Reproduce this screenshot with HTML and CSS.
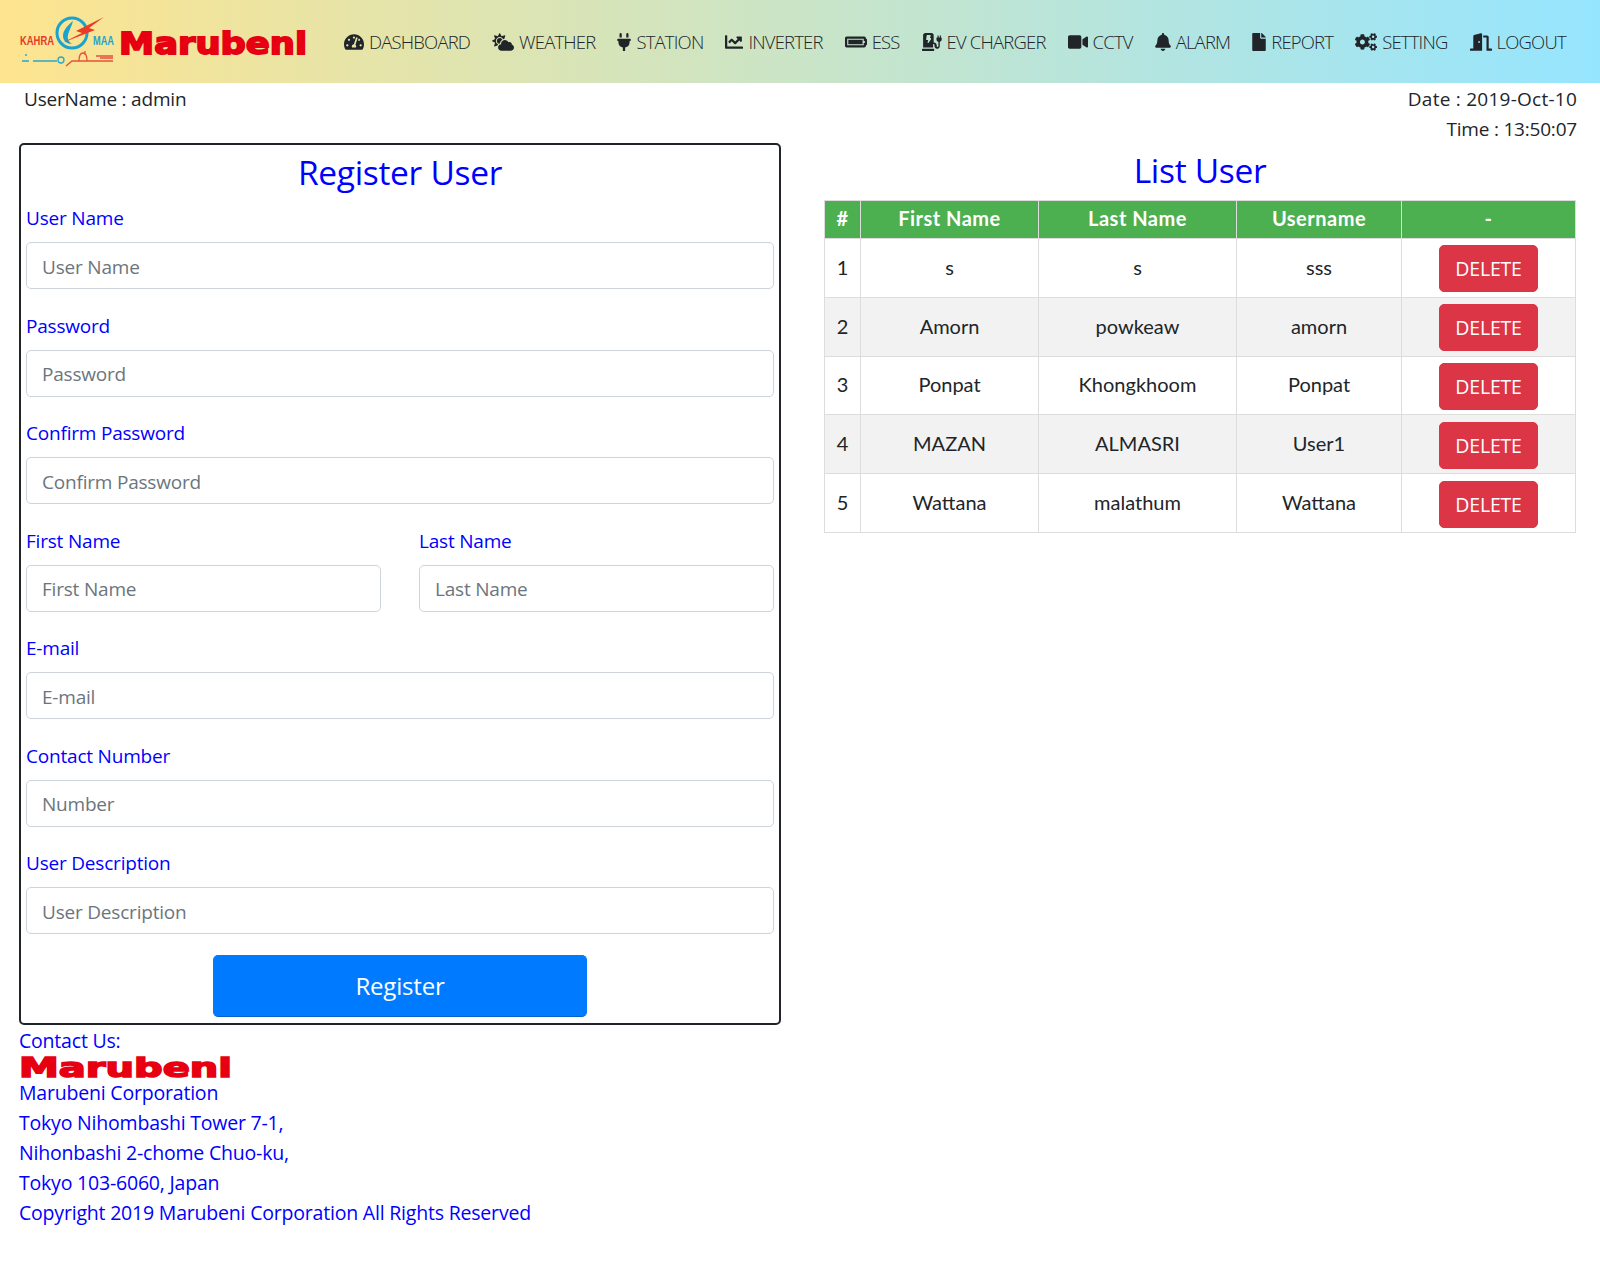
FILE: index.html
```html
<!DOCTYPE html>
<html lang="en">
<head>
    <meta charset="UTF-8">
    <meta name="viewport" content="width=device-width, initial-scale=1.0">
    <title>Register User</title>
    <link rel="stylesheet" href="styles.css">
</head>
<body>
    <nav class="navbar">
        <a class="brand" href="#">
            <svg class="kahramaa" viewBox="0 0 98 54">
                <circle cx="53" cy="19" r="15" class="ring"/>
                <path class="ring-drop" d="M54 7c-5 4-10 9-10 15 0 5 4 8 9 8-3-2-5-5-4-9 1-5 4-9 5-14z"/>
                <path class="bolt" d="M43 29L63 19 57 17 85 3 70 14 76 16z"/>
                <text x="1" y="31" class="k-red" textLength="34" lengthAdjust="spacingAndGlyphs">KAHRA</text>
                <text x="74" y="31" class="k-blue" textLength="21" lengthAdjust="spacingAndGlyphs">MAA</text>
                <path class="k-line-blue" d="M3 47h7M6 41h2M14 47h24"/>
                <circle cx="42" cy="46" r="3" class="k-dot"/>
                <path class="k-line-red" d="M47 52l6-5h41M77 42h17M81 44h13M60 47c0-6 2-8 4-8s4 2 4 8M66 37v4"/>
            </svg>
            <svg class="marubeni nav-logo" viewBox="0 0 188 26" preserveAspectRatio="none"><text x="0" y="25" textLength="188" lengthAdjust="spacingAndGlyphs">Marubeni</text></svg>
        </a>
        <ul class="menu">
            <li><a href="#"><svg class="ico w-tacho" viewBox="0 0 576 512"><path d="M288 32C128.94 32 0 160.94 0 320c0 52.8 14.25 102.26 39.06 144.8 5.61 9.62 16.3 15.2 27.44 15.2h443c11.14 0 21.83-5.58 27.44-15.2C561.75 422.26 576 372.8 576 320c0-159.06-128.94-288-288-288zm0 64c14.71 0 26.58 10.13 30.32 23.65-1.11 2.26-2.64 4.23-3.45 6.67l-9.22 27.67c-5.13 3.49-10.97 6.01-17.64 6.01-17.67 0-32-14.33-32-32S270.33 96 288 96zM96 384c-17.67 0-32-14.33-32-32s14.33-32 32-32 32 14.33 32 32-14.33 32-32 32zm48-160c-17.67 0-32-14.33-32-32s14.33-32 32-32 32 14.33 32 32-14.33 32-32 32zm246.77-72.41l-61.33 184C343.13 347.33 352 364.54 352 384c0 11.72-3.38 22.55-8.88 32H232.88c-5.5-9.45-8.88-20.28-8.88-32 0-33.94 26.5-61.43 59.9-63.59l61.34-184.01c4.17-12.56 17.73-19.45 30.36-15.17 12.57 4.19 19.35 17.79 15.17 30.36zm14.66 57.2l15.52-46.55c3.47-1.29 7.13-2.23 11.05-2.23 17.67 0 32 14.33 32 32s-14.33 32-32 32c-11.38-.01-20.89-6.28-26.57-15.22zM480 384c-17.67 0-32-14.33-32-32s14.33-32 32-32 32 14.33 32 32-14.33 32-32 32z"/></svg>DASHBOARD</a></li>
            <li><a href="#"><svg class="ico w-cloud" viewBox="0 0 640 512"><path d="M575.2 325.7c.2-1.9.8-3.7.8-5.6 0-35.3-28.7-64-64-64-12.6 0-24.2 3.8-34.1 10-17.6-38.8-56.5-66-101.9-66-61.8 0-112 50.1-112 112 0 3 .7 5.8.9 8.7-49.6 3.7-88.9 44.7-88.9 95.3 0 53 43 96 96 96h272c53 0 96-43 96-96 0-42.1-27.2-77.4-64.8-90.4zm-430.4-22.6c-43.7-43.7-43.7-114.7 0-158.3 43.7-43.7 114.7-43.7 158.4 0 9.7 9.7 16.9 20.9 22.3 32.7 9.8-3.7 20.1-6 30.7-7.5L386 81.1c4-11.9-7.3-23.1-19.2-19.2L279 91.2 237.5 8.4C232-2.8 216-2.8 210.4 8.4L169 91.2 81.1 61.9C69.3 58 58 69.3 61.9 81.1l29.3 87.8-82.8 41.5c-11.2 5.6-11.2 21.5 0 27.1l82.8 41.4-29.3 87.8c-4 11.9 7.3 23.1 19.2 19.2l76.1-25.3c6.1-12.4 14-23.7 23.6-33.5-13.1-5.4-25.4-13.4-36-24zm-4.8-79.2c0 40.8 29.3 74.8 67.9 82.3 8-4.7 16.3-8.8 25.2-11.7 5.4-44.3 31-82.5 67.4-105C287.3 160.4 258 140 224 140c-46.3 0-84 37.6-84 83.9z"/></svg>WEATHER</a></li>
            <li><a href="#"><svg class="ico w-plug" viewBox="0 0 384 512"><path d="M320 32a32 32 0 0 0-64 0v96h64zm48 128H16a16 16 0 0 0-16 16v32a16 16 0 0 0 16 16h16v32a160.07 160.07 0 0 0 128 156.8V512h64v-99.2A160.07 160.07 0 0 0 352 256v-32h16a16 16 0 0 0 16-16v-32a16 16 0 0 0-16-16zM128 32a32 32 0 0 0-64 0v96h64z"/></svg>STATION</a></li>
            <li><a href="#"><svg class="ico w-chart" viewBox="0 0 512 512"><path d="M496 384H64V80c0-8.84-7.16-16-16-16H16C7.16 64 0 71.16 0 80v336c0 17.67 14.33 32 32 32h464c8.84 0 16-7.16 16-16v-32c0-8.84-7.16-16-16-16zM464 96H345.94c-21.38 0-32.09 25.85-16.97 40.97l32.4 32.4L288 242.75l-73.37-73.37c-12.5-12.5-32.76-12.5-45.25 0l-68.69 68.69c-6.25 6.25-6.25 16.38 0 22.63l22.62 22.62c6.25 6.25 16.38 6.25 22.63 0L192 237.25l73.37 73.37c12.5 12.5 32.76 12.5 45.25 0l96-96 32.4 32.4c15.12 15.12 40.97 4.41 40.97-16.97V112c.01-8.84-7.15-16-16-16z"/></svg>INVERTER</a></li>
            <li><a href="#"><svg class="ico w-batt" viewBox="0 0 640 512"><path d="M544 160v64h32v64h-32v64H64V160h480m16-64H48c-26.51 0-48 21.49-48 48v224c0 26.51 21.49 48 48 48h512c26.51 0 48-21.49 48-48v-16h8c13.255 0 24-10.745 24-24V184c0-13.255-10.745-24-24-24h-8v-16c0-26.51-21.49-48-48-48zm-48 96H96v128h416V192z"/></svg>ESS</a></li>
            <li><a href="#"><svg class="ico w-ev" viewBox="0 0 576 512"><path d="M336 448H16c-8.8 0-16 7.2-16 16v32c0 8.8 7.2 16 16 16h320c8.800 0 16-7.200 16-16v-32c0-8.800-7.200-16-16-16zm208-320V80c0-8.800-7.200-16-16-16s-16 7.200-16 16v48h-32V80c0-8.800-7.200-16-16-16s-16 7.200-16 16v48h-16c-8.800 0-16 7.200-16 16v32c0 35.800 23.500 66.100 56 76.300V376c0 13.200-10.800 24-24 24s-24-10.800-24-24v-28c0-44.200-35.800-80-80-80h-8V64c0-35.300-28.700-64-64-64H96C60.700 0 32 28.700 32 64v352h288V316h8c17.700 0 32 14.300 32 32v24.400c0 39.700 28.600 75.500 68.100 79.100 45.400 4.100 83.900-31.600 83.900-76V252.300c32.500-10.200 56-40.500 56-76.300v-32c0-8.800-7.200-16-16-16zM260 174.800l-70 106c-3 4.400-7.900 7.200-13.400 7.200-10.200 0-17.900-9.500-15.400-19.400l17.200-70.600H134c-9.200 0-16.300-8.100-15-17.300l16-112c1.100-7.900 7.800-13.700 15.800-13.700h84c10.700 0 18.600 10.400 15.300 20.700L229.400 144H246c11.800 0 19.300 13.500 14 30.800z"/></svg>EV CHARGER</a></li>
            <li><a href="#"><svg class="ico w-video" viewBox="0 0 576 512"><path d="M336.2 64H47.8C21.4 64 0 85.4 0 111.8v288.4C0 426.6 21.4 448 47.8 448h288.4c26.4 0 47.8-21.4 47.8-47.8V111.8c0-26.4-21.4-47.8-47.8-47.8zm189.4 37.7L416 177.3v157.4l109.6 75.5c21.2 14.6 50.4-.3 50.4-25.8V127.5c0-25.4-29.1-40.4-50.4-25.8z"/></svg>CCTV</a></li>
            <li><a href="#"><svg class="ico w-bell" viewBox="0 0 448 512"><path d="M224 512c35.32 0 63.97-28.65 63.97-64H160.03c0 35.35 28.65 64 63.97 64zm215.39-149.71c-19.32-20.76-55.47-51.99-55.47-154.29 0-77.7-54.48-139.9-127.94-155.16V32c0-17.67-14.32-32-31.98-32s-31.98 14.33-31.98 32v20.84C118.56 68.1 64.08 130.3 64.08 208c0 102.3-36.15 133.53-55.47 154.29-6 6.45-8.66 14.16-8.61 21.71.11 16.4 12.98 32 32.1 32h383.8c19.12 0 32-15.6 32.1-32 .05-7.55-2.61-15.27-8.61-21.71z"/></svg>ALARM</a></li>
            <li><a href="#"><svg class="ico w-file" viewBox="0 0 384 512"><path d="M224 136V0H24C10.700 0 0 10.700 0 24v464c0 13.300 10.700 24 24 24h336c13.300 0 24-10.700 24-24V160H248c-13.200 0-24-10.800-24-24zm160-14.100v6.100H256V0h6.100c6.400 0 12.500 2.500 17 7l97.900 98c4.500 4.500 7 10.600 7 16.900z"/></svg>REPORT</a></li>
            <li><a href="#"><svg class="ico w-cogs" viewBox="0 0 640 512"><path d="M512.100 191l-8.200 14.300c-3 5.300-9.400 7.500-15.100 5.400-11.800-4.400-22.600-10.700-32.100-18.600-4.600-3.800-5.800-10.500-2.800-15.700l8.200-14.300c-6.900-8-12.300-17.300-15.900-27.400h-16.500c-6 0-11.200-4.300-12.200-10.300-2-12-2.100-24.600 0-37.100 1-6 6.200-10.400 12.200-10.400h16.500c3.600-10.100 9-19.400 15.900-27.400l-8.200-14.300c-3-5.200-1.900-11.900 2.800-15.700 9.500-7.900 20.400-14.200 32.100-18.600 5.700-2.100 12.100.1 15.100 5.400l8.200 14.300c10.500-1.900 21.200-1.900 31.700 0L552 6.300c3-5.300 9.400-7.500 15.100-5.400 11.800 4.400 22.600 10.700 32.100 18.600 4.600 3.800 5.800 10.500 2.800 15.700l-8.200 14.300c6.900 8 12.300 17.300 15.900 27.400h16.500c6 0 11.200 4.300 12.200 10.300 2 12 2.100 24.600 0 37.100-1 6-6.200 10.400-12.200 10.400h-16.500c-3.600 10.100-9 19.400-15.900 27.400l8.200 14.300c3 5.200 1.900 11.900-2.800 15.700-9.500 7.900-20.400 14.200-32.100 18.600-5.700 2.100-12.100-.1-15.100-5.400l-8.200-14.300c-10.400 1.900-21.200 1.900-31.700 0zm-10.500-58.800c38.500 29.600 82.400-14.300 52.800-52.800-38.500-29.700-82.400 14.300-52.800 52.800zM386.300 286.100l33.700 16.800c10.100 5.800 14.500 18.100 10.500 29.100-8.900 24.200-26.400 46.400-42.600 65.800-7.400 8.900-20.200 11.100-30.300 5.300l-29.100-16.800c-16 13.700-34.600 24.600-54.900 31.700v33.600c0 11.600-8.300 21.600-19.700 23.600-24.600 4.200-50.400 4.400-75.900 0-11.500-2-20-11.900-20-23.600V418c-20.300-7.200-38.900-18-54.900-31.700L74 403c-10 5.800-22.900 3.600-30.300-5.300-16.200-19.400-33.300-41.600-42.200-65.700-4-10.900.4-23.200 10.500-29.100l33.300-16.800c-3.900-20.900-3.900-42.400 0-63.400L12 205.800c-10.100-5.800-14.600-18.100-10.500-29 8.900-24.200 26-46.400 42.200-65.800 7.400-8.900 20.200-11.100 30.300-5.300l29.100 16.800c16-13.700 34.600-24.600 54.900-31.700V57.100c0-11.500 8.200-21.500 19.600-23.500 24.600-4.200 50.500-4.400 76-.1 11.500 2 20 11.900 20 23.600v33.600c20.300 7.200 38.900 18 54.900 31.700l29.100-16.800c10-5.800 22.900-3.600 30.300 5.300 16.200 19.400 33.200 41.600 42.100 65.800 4 10.900.1 23.200-10 29.100l-33.700 16.800c3.900 21 3.900 42.500 0 63.500zm-117.600 21.100c59.200-77-28.700-164.900-105.700-105.700-59.200 77 28.700 164.900 105.700 105.700zm243.400 182.700l-8.200 14.300c-3 5.300-9.400 7.500-15.100 5.400-11.800-4.400-22.600-10.700-32.100-18.600-4.600-3.800-5.800-10.500-2.800-15.700l8.200-14.300c-6.900-8-12.300-17.300-15.900-27.400h-16.500c-6 0-11.200-4.300-12.200-10.300-2-12-2.100-24.600 0-37.100 1-6 6.200-10.400 12.200-10.400h16.500c3.600-10.100 9-19.400 15.900-27.400l-8.200-14.300c-3-5.200-1.900-11.900 2.800-15.700 9.500-7.900 20.400-14.200 32.100-18.600 5.700-2.100 12.100.1 15.100 5.400l8.200 14.300c10.500-1.900 21.200-1.900 31.700 0l8.200-14.300c3-5.300 9.400-7.500 15.100-5.400 11.800 4.400 22.600 10.700 32.100 18.600 4.600 3.800 5.800 10.500 2.800 15.700l-8.200 14.300c6.900 8 12.300 17.300 15.900 27.400h16.500c6 0 11.200 4.300 12.200 10.300 2 12 2.100 24.600 0 37.100-1 6-6.200 10.400-12.200 10.400h-16.500c-3.600 10.100-9 19.400-15.900 27.400l8.200 14.300c3 5.200 1.900 11.900-2.800 15.700-9.500 7.900-20.400 14.200-32.100 18.600-5.700 2.100-12.100-.1-15.100-5.400l-8.200-14.300c-10.400 1.900-21.200 1.900-31.700 0zM501.600 431c38.500 29.600 82.400-14.300 52.800-52.800-38.500-29.600-82.400 14.300-52.800 52.800z"/></svg>SETTING</a></li>
            <li><a href="#"><svg class="ico w-door" viewBox="0 0 640 512"><path d="M624 448h-80V113.450C544 86.190 522.470 64 496 64H384v64h96v384h144c8.840 0 16-7.160 16-16v-32c0-8.840-7.160-16-16-16zM312.240 1.010l-192 49.740C105.990 54.440 96 67.700 96 82.920V448H16c-8.840 0-16 7.160-16 16v32c0 8.840 7.160 16 16 16h336V33.180c0-21.580-19.560-37.410-39.760-32.170zM264 288c-13.250 0-24-14.330-24-32s10.750-32 24-32 24 14.330 24 32-10.750 32-24 32z"/></svg>LOGOUT</a></li>
        </ul>
    </nav>

    <div class="info-row">
        <div class="user-name">UserName : admin</div>
        <div class="date-time">
            <div class="date-line">Date : 2019-Oct-10</div>
            <div>Time : 13:50:07</div>
        </div>
    </div>

    <main class="content">
        <section class="register-col">
            <form class="register-card">
                <h2 class="card-title">Register User</h2>
                <div class="form-group">
                    <label>User Name</label>
                    <input class="form-control" type="text" placeholder="User Name">
                </div>
                <div class="form-group">
                    <label>Password</label>
                    <input class="form-control" type="password" placeholder="Password">
                </div>
                <div class="form-group">
                    <label>Confirm Password</label>
                    <input class="form-control" type="password" placeholder="Confirm Password">
                </div>
                <div class="form-row">
                    <div class="form-group">
                        <label>First Name</label>
                        <input class="form-control" type="text" placeholder="First Name">
                    </div>
                    <div class="form-group">
                        <label>Last Name</label>
                        <input class="form-control" type="text" placeholder="Last Name">
                    </div>
                </div>
                <div class="form-group">
                    <label>E-mail</label>
                    <input class="form-control" type="text" placeholder="E-mail">
                </div>
                <div class="form-group">
                    <label>Contact Number</label>
                    <input class="form-control" type="text" placeholder="Number">
                </div>
                <div class="form-group">
                    <label>User Description</label>
                    <input class="form-control" type="text" placeholder="User Description">
                </div>
                <button class="btn-register" type="button">Register</button>
            </form>

            <footer class="contact">
                <div>Contact Us:</div>
                <svg class="marubeni foot-logo" viewBox="0 0 188 26" preserveAspectRatio="none"><text x="0" y="25" textLength="188" lengthAdjust="spacingAndGlyphs">Marubeni</text></svg>
                <div>Marubeni Corporation</div>
                <div>Tokyo Nihombashi Tower 7-1,</div>
                <div>Nihonbashi 2-chome Chuo-ku,</div>
                <div>Tokyo 103-6060, Japan</div>
                <div>Copyright 2019 Marubeni Corporation All Rights Reserved</div>
            </footer>
        </section>

        <section class="list-col">
            <h2 class="list-title">List User</h2>
            <table class="user-table">
                <colgroup>
                    <col class="c-num"><col class="c-first"><col class="c-last"><col class="c-user"><col>
                </colgroup>
                <thead>
                    <tr><th>#</th><th>First Name</th><th>Last Name</th><th>Username</th><th>-</th></tr>
                </thead>
                <tbody>
                    <tr><td>1</td><td>s</td><td>s</td><td>sss</td><td><button class="btn-delete" type="button">DELETE</button></td></tr>
                    <tr><td>2</td><td>Amorn</td><td>powkeaw</td><td>amorn</td><td><button class="btn-delete" type="button">DELETE</button></td></tr>
                    <tr><td>3</td><td>Ponpat</td><td>Khongkhoom</td><td>Ponpat</td><td><button class="btn-delete" type="button">DELETE</button></td></tr>
                    <tr><td>4</td><td>MAZAN</td><td>ALMASRI</td><td>User1</td><td><button class="btn-delete" type="button">DELETE</button></td></tr>
                    <tr><td>5</td><td>Wattana</td><td>malathum</td><td>Wattana</td><td><button class="btn-delete" type="button">DELETE</button></td></tr>
                </tbody>
            </table>
        </section>
    </main>
</body>
</html>
```

FILE: styles.css
```css
* { box-sizing: border-box; }
body { margin: 0; font-family: "Open Sans", "Noto Sans", sans-serif; font-size: 19px; line-height: 30px; color: #212529; background: #fff; letter-spacing: -0.2px; }
a { color: inherit; text-decoration: none; }

/* top bar */
.navbar { height: 83px; display: flex; align-items: center; padding-left: 19px; background: linear-gradient(to right, #fee48f, #96e5ff); }
.brand { display: flex; align-items: center; }
.kahramaa { width: 98px; height: 54px; margin-top: -1px; overflow: visible; }
.ring { fill: none; stroke: #1ba3d0; stroke-width: 3; }
.ring-drop { fill: #1ba3d0; }
.bolt { fill: #ee3a24; }
.k-red { font: 700 12px "Liberation Sans", sans-serif; fill: #e8392a; letter-spacing: 0; }
.k-blue { font: 700 12px "Liberation Sans", sans-serif; fill: #1ba3d0; letter-spacing: 0; }
.k-line-blue { fill: none; stroke: #2aa7c9; stroke-width: 1.3; }
.k-dot { fill: none; stroke: #2aa7c9; stroke-width: 1.3; }
.k-line-red { fill: none; stroke: #e8503a; stroke-width: 1.3; }
.marubeni { display: block; overflow: visible; }
.marubeni text { font: 700 31px "DejaVu Sans", sans-serif; fill: #e60012; stroke: #e60012; stroke-width: 1.8; letter-spacing: 0; }
.nav-logo { width: 188px; height: 26px; margin-left: 2px; }
.menu { display: flex; gap: 22px; list-style: none; margin: 0 0 0 37px; padding: 0; }
.menu a { display: flex; align-items: center; gap: 5px; font-size: 18.5px; font-weight: 300; letter-spacing: -0.82px; white-space: nowrap; }
.ico { height: 18px; fill: #212529; flex: none; }
.w-tacho { width: 20px; }
.w-cloud { width: 22px; }
.w-plug { width: 14px; }
.w-chart { width: 18px; }
.w-batt { width: 22px; }
.w-ev { width: 20px; }
.w-video { width: 20px; }
.w-bell { width: 16px; }
.w-file { width: 14px; }
.w-cogs { width: 22px; }
.w-door { width: 22px; }

.info-row { display: flex; justify-content: space-between; height: 60px; padding: 1px 23px 0 24px; }
.date-time { text-align: right; }
.date-line { letter-spacing: 0.25px; }

.content { display: grid; grid-template-columns: 762px 752px; column-gap: 43px; padding-left: 19px; align-items: start; }

/* register form */
.register-card { border: 2px solid #212529; border-radius: 5px; padding: 6px 5px; height: 882px; }
.card-title { margin: 0 0 10px; font-size: 33.5px; font-weight: 400; line-height: 42px; text-align: center; color: #00f; letter-spacing: -0.3px; }
.form-group { margin-bottom: 21.5px; }
.form-group label { display: block; margin-bottom: 9px; color: #00f; }
.form-row { display: grid; grid-template-columns: 1fr 1fr; column-gap: 38px; }
.form-control { display: block; width: 100%; height: 47px; padding: 7px 15px 5px; border: 1px solid #ced4da; border-radius: 5px; font: inherit; letter-spacing: inherit; color: #495057; }
.form-control::placeholder { color: #6c757d; opacity: 1; }
.btn-register { display: block; width: 374px; height: 62px; margin: -1px auto 0; background: #007bff; border: 1px solid #007bff; border-bottom-color: #0062cc; border-radius: 5px; color: #fff; font: inherit; font-size: 24px; letter-spacing: inherit; }

.contact { color: #00f; padding-top: 1px; font-size: 19.5px; }
.foot-logo { width: 213px; height: 22px; }

/* user list */
.list-title { margin: 0 0 7px; padding-top: 5px; font-size: 33.5px; font-weight: 400; line-height: 44px; text-align: center; color: #00f; letter-spacing: -0.3px; height: 50px; }
.user-table { width: 752px; table-layout: fixed; border-collapse: collapse; font-family: Lato, sans-serif; font-size: 20px; letter-spacing: 0; }
.c-num { width: 36px; }
.c-first { width: 178px; }
.c-last { width: 198px; }
.c-user { width: 165px; }
.user-table th, .user-table td { border: 1px solid #ddd; text-align: center; padding: 4px 0 6px; vertical-align: middle; }
.user-table th { height: 38px; padding: 0 0 3px; background: #4caf50; color: #fff; font-weight: 700; letter-spacing: 0.5px; }
.user-table td { height: 58.8px; }
.user-table tbody tr:nth-child(even) { background: #f2f2f2; }
.btn-delete { width: 99px; height: 47px; margin: 2px 0 -2px; background: #dc3545; border: 1px solid #dc3545; border-radius: 5px; color: #fff; font-family: "Open Sans", sans-serif; font-size: 19.5px; letter-spacing: -0.2px; vertical-align: middle; }
```
